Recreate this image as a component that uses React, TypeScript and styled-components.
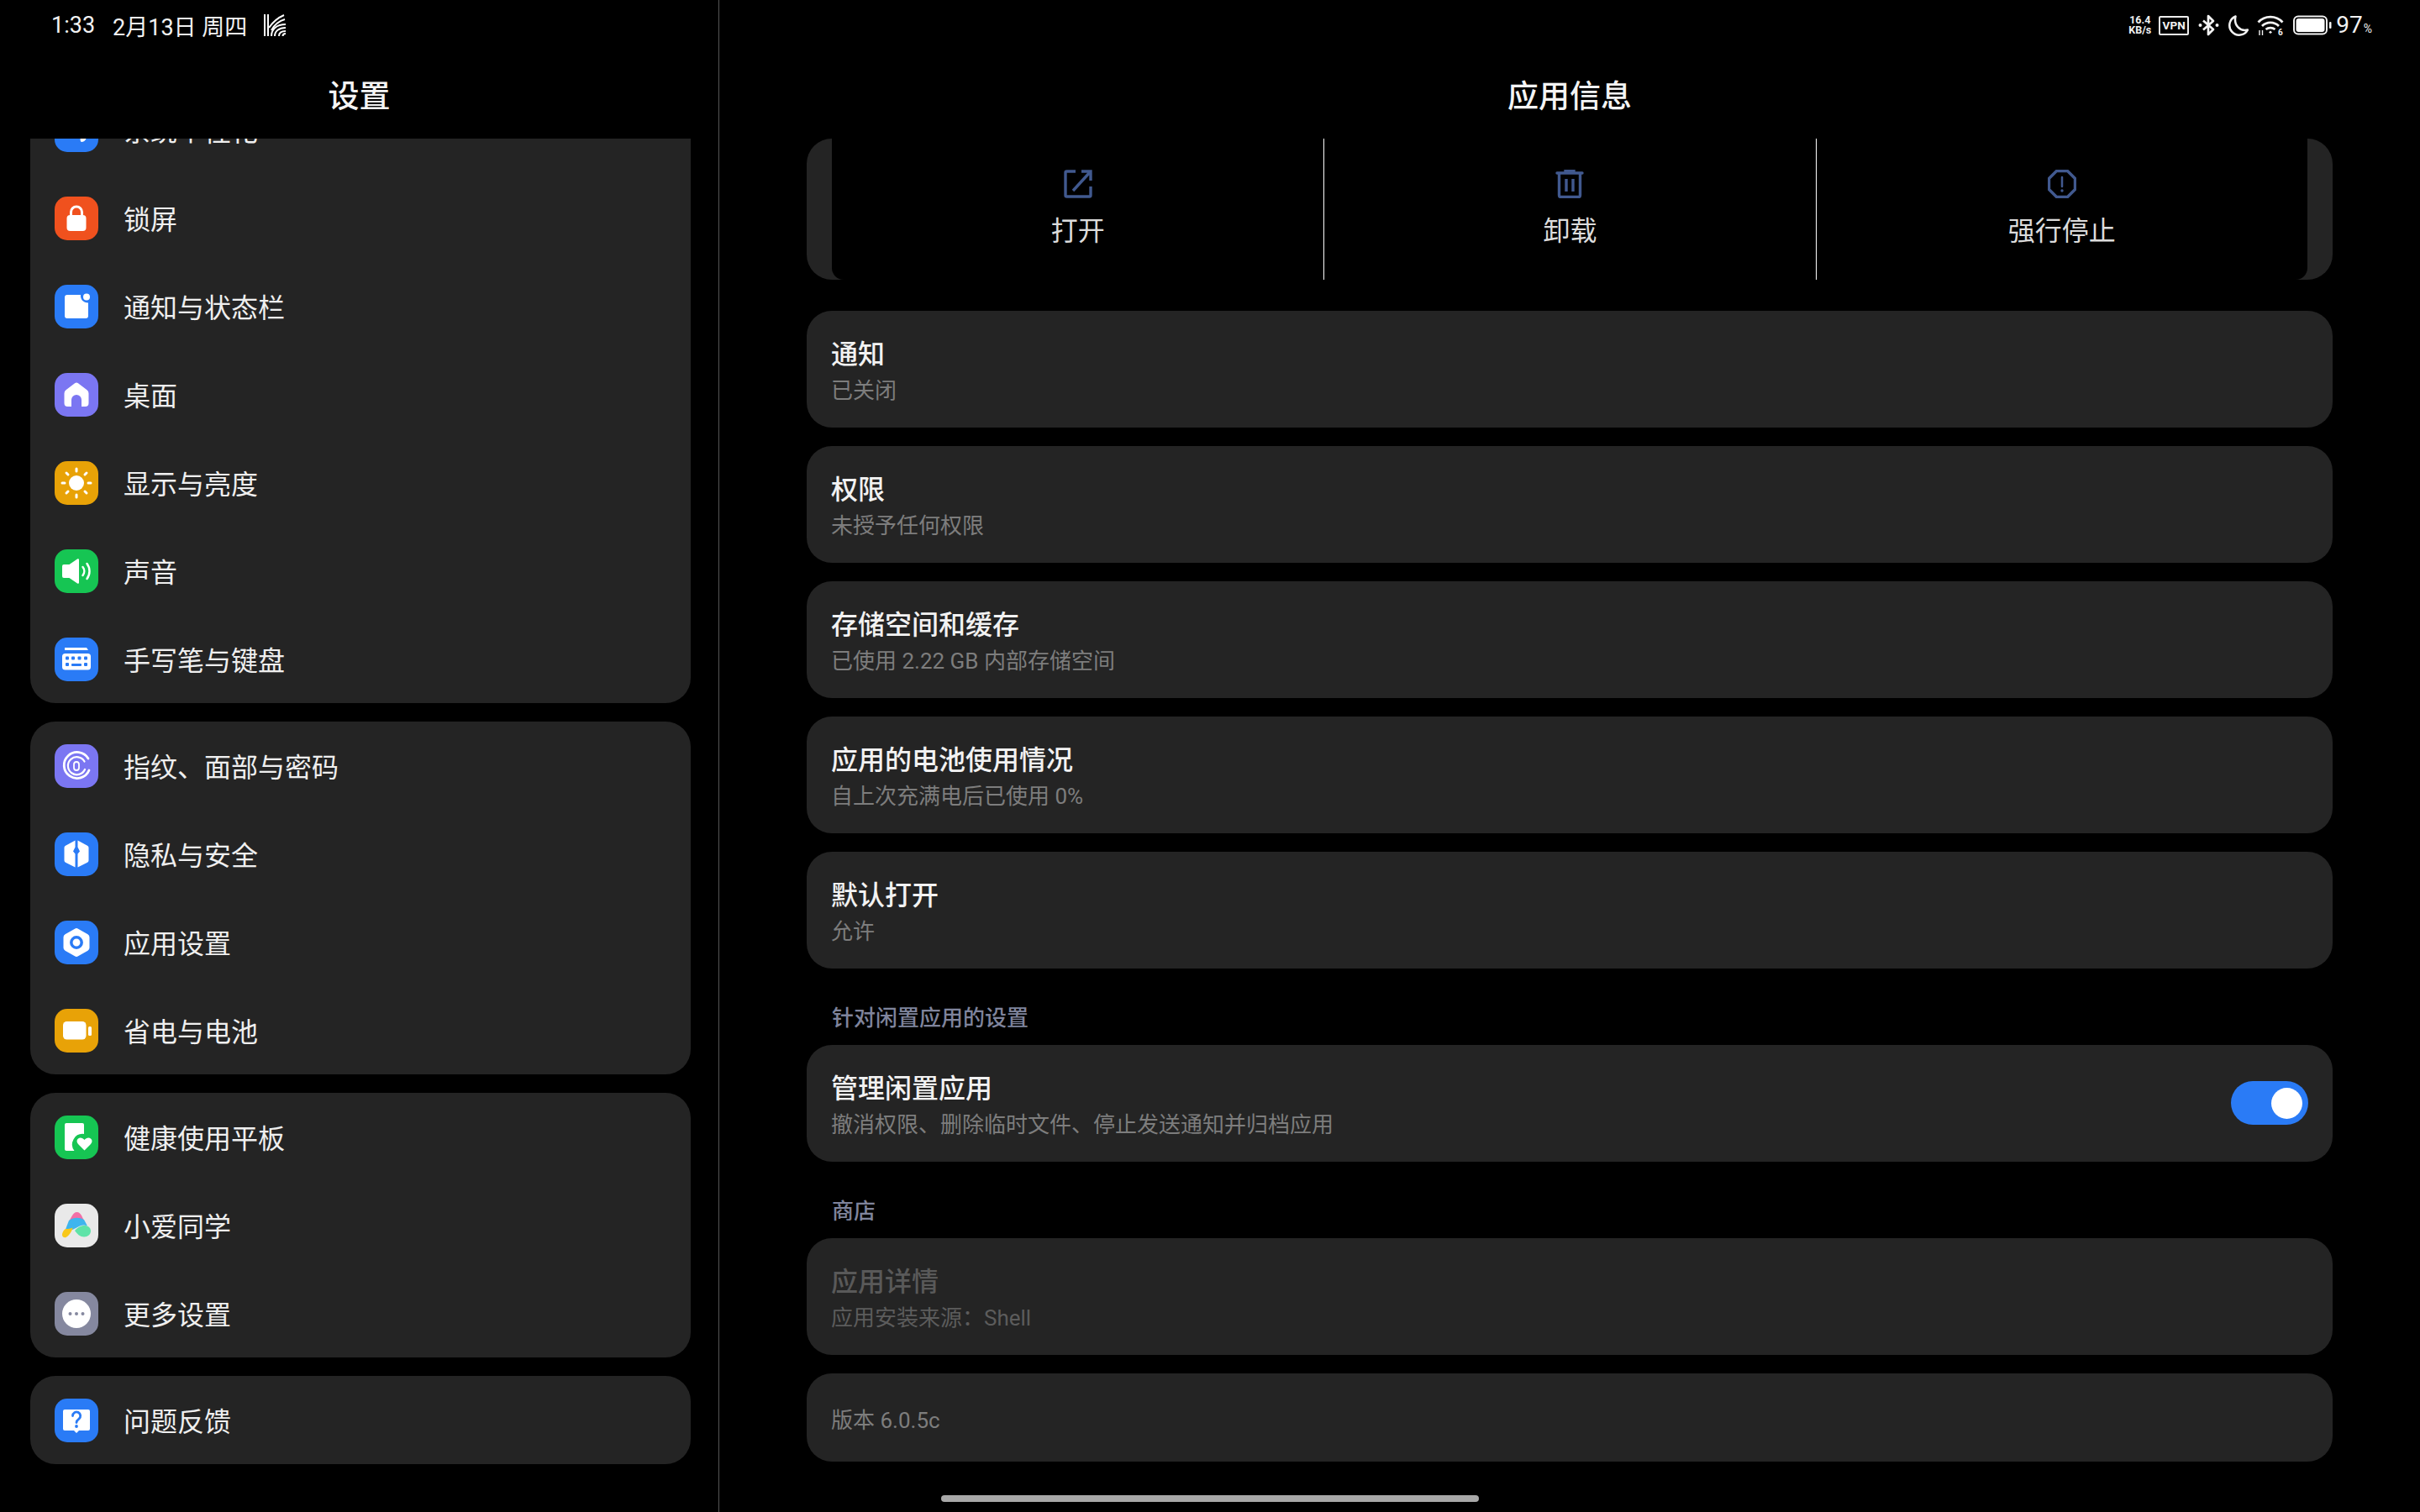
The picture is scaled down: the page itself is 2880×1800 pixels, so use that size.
import React from 'react';
import styled, { createGlobalStyle } from 'styled-components';

const Global = createGlobalStyle`
  html, body { margin: 0; padding: 0; background: #000; width: 2880px; height: 1800px; overflow: hidden; }
  * { box-sizing: border-box; }
  body { font-family: Roboto, "Noto Sans CJK SC", sans-serif; color: #fff; }
`;

const Screen = styled.div`
  position: relative;
  display: grid;
  grid-template-columns: 856px 1fr;
  width: 2880px;
  height: 1800px;
  background: #000;
  overflow: hidden;
`;
const Pane = styled.section<{ $divider?: boolean }>`
  display: flex;
  flex-direction: column;
  height: 1800px;
  min-width: 0;
  border-right: ${p => (p.$divider ? '1px solid #565656' : 'none')};
`;
const StatusBar = styled.div<{ $end?: boolean }>`
  display: flex;
  align-items: center;
  justify-content: ${p => (p.$end ? 'flex-end' : 'flex-start')};
  height: 60px;
  padding: ${p => (p.$end ? '0 57px 0 0' : '0 0 0 61px')};
  font-size: 27px;
  color: #f2f2f2;
  flex: none;
`;
const Clock = styled.span`
  margin-right: 21px;
`;
const DateText = styled.span`
  margin-right: 20px;
`;
const NetSpeed = styled.div`
  display: flex;
  flex-direction: column;
  align-items: center;
  font-size: 12.5px;
  line-height: 12px;
  font-weight: 700;
  margin-right: 9px;
`;
const VpnBox = styled.div`
  width: 36px;
  height: 23px;
  border: 2px solid #eee;
  border-radius: 2px;
  font-size: 13.5px;
  font-weight: 700;
  line-height: 19px;
  text-align: center;
  letter-spacing: 0.2px;
  margin-right: 11px;
`;
const StatusIcon = styled.svg<{ $gap: number }>`
  display: block;
  margin-right: ${p => p.$gap}px;
  flex: none;
`;
const BatteryValue = styled.span`
  font-size: 28px;
  line-height: 60px;
  padding-top: 3px;
`;
const Percent = styled.span`
  font-size: 14px;
  margin-left: 1px;
`;
const TitleBar = styled.header`
  display: flex;
  align-items: center;
  justify-content: center;
  height: 105px;
  padding-bottom: 2px;
  flex: none;
  font-size: 37px;
  font-weight: 500;
  color: #f4f4f4;
`;
const SettingsList = styled.div`
  flex: 1;
  min-height: 0;
  overflow: hidden;
  display: flex;
  flex-direction: column;
  gap: 22px;
  padding: 0 33px 0 36px;
`;
const Group = styled.div<{ $scrolled?: boolean }>`
  background: #242424;
  border-radius: 30px;
  flex: none;
  margin-top: ${p => (p.$scrolled ? '-63px' : '0')};
`;
const MenuRow = styled.div`
  display: flex;
  align-items: center;
  height: 105px;
  padding-left: 29px;
  gap: 30px;
  font-size: 32px;
  color: #efefef;
`;
const MenuLabel = styled.span`
  line-height: 44px;
  position: relative;
  top: 2px;
`;
const Tile = styled.div<{ $bg: string }>`
  width: 52px;
  height: 52px;
  border-radius: 15px;
  background: ${p => p.$bg};
  flex: none;
  svg { display: block; }
`;
const Detail = styled.div`
  flex: 1;
  min-height: 0;
  overflow: hidden;
  display: flex;
  flex-direction: column;
  padding: 0 104px;
`;
const ActionCard = styled.div`
  flex: none;
  height: 168px;
  padding: 0 30px;
  background: #242424;
  border-radius: 30px;
  margin-bottom: 37px;
`;
const ActionGrid = styled.div`
  display: grid;
  grid-template-columns: repeat(3, 1fr);
  height: 100%;
  background: #000;
  border-radius: 0 0 14px 14px;
`;
const ActionCell = styled.div<{ $first?: boolean }>`
  display: flex;
  flex-direction: column;
  align-items: center;
  padding-top: 37px;
  gap: 17px;
  border-left: ${p => (p.$first ? 'none' : '1px solid #fff')};
  font-size: 32px;
  line-height: 44px;
  color: #dcdcdc;
  svg { display: block; }
`;
const InfoStack = styled.div`
  display: flex;
  flex-direction: column;
  gap: 22px;
  flex: none;
`;
const InfoCard = styled.div<{ $compact?: boolean }>`
  display: flex;
  align-items: center;
  justify-content: space-between;
  height: ${p => (p.$compact ? '105px' : '139px')};
  padding: 0 29px 0 29px;
  background: #242424;
  border-radius: 30px;
  flex: none;
`;
const InfoText = styled.div`
  display: flex;
  flex-direction: column;
  padding-top: 7px;
`;
const InfoTitle = styled.div<{ $muted?: boolean }>`
  font-size: 32px;
  line-height: 44px;
  font-weight: 500;
  color: ${p => (p.$muted ? '#595959' : '#f2f2f2')};
`;
const InfoSub = styled.div<{ $muted?: boolean }>`
  font-size: 26px;
  line-height: 42px;
  color: ${p => (p.$muted ? '#5c5c5c' : '#7d7d7d')};
`;
const SectionLabel = styled.div`
  padding: 41px 0 14px 30px;
  font-size: 26px;
  line-height: 36px;
  font-weight: 500;
  color: #7f849c;
`;
const Toggle = styled.div`
  display: flex;
  align-items: center;
  justify-content: flex-end;
  width: 92px;
  height: 52px;
  margin-top: -1px;
  padding-right: 7px;
  border-radius: 26px;
  background: #2a7bf6;
  flex: none;
`;
const Knob = styled.div`
  width: 37px;
  height: 37px;
  border-radius: 50%;
  background: #fff;
`;
const HomeBar = styled.div`
  position: absolute;
  left: 1120px;
  bottom: 12px;
  width: 640px;
  height: 8px;
  border-radius: 4px;
  background: #a8a8a8;
`;

const BLUE = '#2a7bf6';
const Svg = ({ children }: { children: React.ReactNode }) => (
  <svg width="52" height="52" viewBox="0 0 52 52">{children}</svg>
);

const icons: Record<string, { bg: string; art: React.ReactNode }> = {
  personal: {
    bg: BLUE,
    art: <Svg><path d="M31 35c2-2 5-4 9-4l-3 6c-1 2-3 3-5 3-1 0-2-3-1-5z" fill="#fff" /></Svg>,
  },
  lock: {
    bg: '#f0511e',
    art: (
      <Svg>
        <path d="M19.5 24v-5.5a6.5 6.5 0 0 1 13 0V24" fill="none" stroke="#fff" strokeWidth="3" />
        <rect x="14.5" y="22" width="23" height="19" rx="4" fill="#fff" />
      </Svg>
    ),
  },
  notify: {
    bg: BLUE,
    art: (
      <Svg>
        <path d="M15 12h16c-.6 5 3 9.500 9 9.500V37a3 3 0 0 1-3 3H15a3 3 0 0 1-3-3V15a3 3 0 0 1 3-3z" fill="#fff" />
        <circle cx="38" cy="14.500" r="4" fill="#fff" />
      </Svg>
    ),
  },
  home: {
    bg: '#7b76f2',
    art: (
      <Svg>
        <path fillRule="evenodd" d="M24 12.200a3.400 3.400 0 0 1 4 0l10.500 8a5 5 0 0 1 2 4V36a4 4 0 0 1-4 4H32V32a6 6 0 0 0-12 0v8h-4.500a4 4 0 0 1-4-4V24.200a5 5 0 0 1 2-4z" fill="#fff" />
      </Svg>
    ),
  },
  sun: {
    bg: '#e8a207',
    art: (
      <Svg>
        <circle cx="26" cy="26" r="9" fill="#fff" />
        <g stroke="#fff" strokeWidth="3" strokeLinecap="round">
          <path d="M26 9v3M26 40v3M9 26h3M40 26h3M14 14l2 2M36 36l2 2M38 14l-2 2M16 36l-2 2" />
        </g>
      </Svg>
    ),
  },
  sound: {
    bg: '#16c553',
    art: (
      <Svg>
        <path d="M11 18h6.500L27 11.500c1-.6 2-.1 2 1v27c0 1.100-1 1.600-2 1L17.500 34H11a2 2 0 0 1-2-2V20a2 2 0 0 1 2-2z" fill="#fff" />
        <path d="M33.500 21a8 8 0 0 1 0 10M38.500 17a15 15 0 0 1 0 18" fill="none" stroke="#fff" strokeWidth="2.500" strokeLinecap="round" />
      </Svg>
    ),
  },
  keyboard: {
    bg: BLUE,
    art: (
      <Svg>
        <path d="M12 12h26l2 3H12z" fill="#fff" />
        <rect x="9" y="19" width="34" height="19.500" rx="3.500" fill="#fff" />
        <g fill={BLUE}>
          <rect x="13" y="22.500" width="4" height="4" rx="1" />
          <rect x="20" y="22.500" width="4" height="4" rx="1" />
          <rect x="27.500" y="22.500" width="4" height="4" rx="1" />
          <rect x="35" y="22.500" width="4" height="4" rx="1" />
          <rect x="13" y="30" width="4" height="4" rx="1" />
          <rect x="20" y="31" width="12" height="3" rx="1" />
          <rect x="35" y="30" width="4" height="4" rx="1" />
        </g>
      </Svg>
    ),
  },
  finger: {
    bg: '#7b76f2',
    art: (
      <Svg>
        <g fill="none" stroke="#fff" strokeLinecap="round">
          <path d="M40 17a15.500 15.500 0 1 0 1 14" strokeWidth="2.800" />
          <path d="M35.500 20.500a10.500 10.500 0 1 0 .5 9.500" strokeWidth="2.200" />
          <rect x="23" y="21" width="6" height="10" rx="3" strokeWidth="1.800" />
        </g>
      </Svg>
    ),
  },
  privacy: {
    bg: BLUE,
    art: (
      <Svg>
        <path d="M24.500 9.500v8l-2.500 5 2.500 3v16l-11-5.500a2.500 2.500 0 0 1-2-2.500V18a2.500 2.500 0 0 1 1.500-2.300z" fill="#fff" />
        <path d="M27.500 9.500v8l2.500 5-2.500 3v16l11-5.500a2.500 2.500 0 0 0 2-2.500V18a2.500 2.500 0 0 0-1.500-2.300z" fill="#fff" />
      </Svg>
    ),
  },
  apps: {
    bg: BLUE,
    art: (
      <Svg>
        <path d="M24 9.700a4 4 0 0 1 4 0l11.500 6.500a4 4 0 0 1 2 3.500v12.600a4 4 0 0 1-2 3.500L28 42.300a4 4 0 0 1-4 0l-11.500-6.500a4 4 0 0 1-2-3.500V19.700a4 4 0 0 1 2-3.500z" fill="#fff" />
        <circle cx="26" cy="26" r="6.200" fill="#fff" stroke={BLUE} strokeWidth="3.500" />
      </Svg>
    ),
  },
  battery: {
    bg: '#e8a207',
    art: (
      <Svg>
        <rect x="10" y="15" width="27.500" height="21.500" rx="4.500" fill="#fff" />
        <rect x="40" y="21" width="4" height="11" rx="1.500" fill="#fff" />
      </Svg>
    ),
  },
  health: {
    bg: '#16c553',
    art: (
      <Svg>
        <path d="M14 9h19a2 2 0 0 1 2 2v11a12.500 12.500 0 0 0-11.500 20H14a2 2 0 0 1-2-2V11a2 2 0 0 1 2-2z" fill="#fff" />
        <path d="M35.500 41.500 28 34c-2-2.200-2-5 0-6.500 2.200-1.700 5.500-1 7.500 1.500 2-2.500 5.300-3.200 7.500-1.500 2 1.500 2 4.300 0 6.500z" fill="#fff" />
      </Svg>
    ),
  },
  xiaoai: {
    bg: '#e9e9e9',
    art: (
      <Svg>
        <path d="M26.500 10c2.600 0 4.200 1.700 5.500 4l3 6c-6-3-12-3-18 1l4-7c1.300-2.300 3-4 5.500-4z" fill="#f36fa6" />
        <path d="M17 20c6-4 12-4 18-1l4 7.500c-3-1.500-6-1.500-9 0-3.500 1.800-6 3.300-9 4.500-3 1.200-6.500 1.500-8-.5z" fill="#3eb5ee" />
        <path d="M24 32c3-3 6-5.500 10-6 5-.6 9 2 9 6.500 0 4-3.500 7-8 7-4.500 0-8-3-11-7.500z" fill="#5fe3a8" />
        <path d="M13 30c3 0 6-.5 8.500-1.500-1 4-3.500 9-8 11.500-3.500 1-5.500-2-4-5.500.8-2 2-3.800 3.500-4.500z" fill="#f8c81a" />
      </Svg>
    ),
  },
  more: {
    bg: '#85889f',
    art: (
      <Svg>
        <circle cx="26" cy="26" r="17" fill="#fff" />
        <circle cx="18.500" cy="26" r="2" fill="#85889f" />
        <circle cx="26" cy="26" r="2" fill="#85889f" />
        <circle cx="33.500" cy="26" r="2" fill="#85889f" />
      </Svg>
    ),
  },
  feedback: {
    bg: BLUE,
    art: (
      <Svg>
        <path d="M12 13h28a2 2 0 0 1 2 2v21a2 2 0 0 1-2 2H29l-3 3-3-3H12a2 2 0 0 1-2-2V15a2 2 0 0 1 2-2z" fill="#fff" />
        <path d="M21.500 20.500a4.600 4.600 0 1 1 7.500 3.600c-1.800 1.400-3 2.300-3 4.400" fill="none" stroke={BLUE} strokeWidth="2.800" strokeLinecap="round" />
        <circle cx="26" cy="33" r="1.900" fill={BLUE} />
      </Svg>
    ),
  },
};

const groups: { label: string; icon: string }[][] = [
  [
    { label: '系统个性化', icon: 'personal' },
    { label: '锁屏', icon: 'lock' },
    { label: '通知与状态栏', icon: 'notify' },
    { label: '桌面', icon: 'home' },
    { label: '显示与亮度', icon: 'sun' },
    { label: '声音', icon: 'sound' },
    { label: '手写笔与键盘', icon: 'keyboard' },
  ],
  [
    { label: '指纹、面部与密码', icon: 'finger' },
    { label: '隐私与安全', icon: 'privacy' },
    { label: '应用设置', icon: 'apps' },
    { label: '省电与电池', icon: 'battery' },
  ],
  [
    { label: '健康使用平板', icon: 'health' },
    { label: '小爱同学', icon: 'xiaoai' },
    { label: '更多设置', icon: 'more' },
  ],
  [{ label: '问题反馈', icon: 'feedback' }],
];

const infoCards = [
  { title: '通知', sub: '已关闭' },
  { title: '权限', sub: '未授予任何权限' },
  { title: '存储空间和缓存', sub: '已使用 2.22 GB 内部存储空间' },
  { title: '应用的电池使用情况', sub: '自上次充满电后已使用 0%' },
  { title: '默认打开', sub: '允许' },
];

const ACCENT = '#41598f';
const OpenIcon = () => (
  <svg width="34" height="34" viewBox="0 0 34 34" fill="none" stroke={ACCENT} strokeWidth="3.400">
    <path d="M14 2H3.500A1.500 1.500 0 0 0 2 3.500v27A1.500 1.500 0 0 0 3.500 32h27a1.500 1.500 0 0 0 1.500-1.500V20" />
    <path d="M21 2h11v11M32 2 11 25" />
  </svg>
);
const TrashIcon = () => (
  <svg width="34" height="34" viewBox="0 0 34 34" fill="none" stroke={ACCENT} strokeWidth="3.400">
    <path d="M2 4h30" strokeLinecap="round" />
    <path d="M12 3.500V1.500h10v2" />
    <path d="M4.500 4.500v26a2 2 0 0 0 2 2h21a2 2 0 0 0 2-2v-26" />
    <path d="M13 11v15M21 11v15" />
  </svg>
);
const StopIcon = () => (
  <svg width="34" height="34" viewBox="0 0 34 34" fill="none" stroke={ACCENT} strokeWidth="3.400">
    <path d="M10.500 1.500h13L32.500 10.500v13l-9 9h-13l-9-9v-13z" strokeLinejoin="round" />
    <path d="M17 9v11" strokeWidth="2.500" strokeLinecap="round" />
    <circle cx="17" cy="25" r="1.700" fill={ACCENT} stroke="none" />
  </svg>
);

const Logo = () => (
  <svg width="26" height="26" viewBox="0 0 26 26" fill="none" stroke="#fff" strokeWidth="2">
    <path d="M1 0v26M5 0v26" />
    <path d="M24 1C17 4 11 9 6 16M25 6c-7 2-12 6-16 13" />
    <path d="M9 26c0-8 6-14 17-14" />
    <path d="M13 26c0-6 5-10 13-10" />
    <path d="M18 26c0-4 3-6 8-6" />
    <path d="M22.500 26c0-2 1.500-3 3.500-3" />
  </svg>
);

export default function App() {
  return (
    <Screen>
      <Global />
      <Pane $divider>
        <StatusBar>
          <Clock>1:33</Clock>
          <DateText>2月13日 周四</DateText>
          <Logo />
        </StatusBar>
        <TitleBar>设置</TitleBar>
        <SettingsList>
          {groups.map((rows, i) => (
            <Group key={i} $scrolled={i === 0}>
              {rows.map(r => (
                <MenuRow key={r.label}>
                  <Tile $bg={icons[r.icon].bg}>{icons[r.icon].art}</Tile>
                  <MenuLabel>{r.label}</MenuLabel>
                </MenuRow>
              ))}
            </Group>
          ))}
        </SettingsList>
      </Pane>
      <Pane>
        <StatusBar $end>
          <NetSpeed>
            <span>16.4</span>
            <span>KB/s</span>
          </NetSpeed>
          <VpnBox>VPN</VpnBox>
          <StatusIcon $gap={10} width="25" height="26" viewBox="0 0 25 26" fill="none" stroke="#f2f2f2" strokeWidth="2.700">
            <path d="M6 7.500 18 18l-6 6V2l6 6L6 18.500" strokeLinejoin="round" />
            <circle cx="2.500" cy="13" r="2" fill="#f2f2f2" stroke="none" />
            <circle cx="22.500" cy="13" r="2" fill="#f2f2f2" stroke="none" />
          </StatusIcon>
          <StatusIcon $gap={10} width="25" height="26" viewBox="0 0 25 26" fill="none" stroke="#f2f2f2" strokeWidth="2.500">
            <path d="M9.500 2.500A11.500 11.500 0 1 0 24 18.500C15 21 7 13 9.500 2.500z" strokeLinejoin="round" />
          </StatusIcon>
          <StatusIcon $gap={11} width="32" height="32" viewBox="0 0 32 32" fill="none" stroke="#f2f2f2" strokeWidth="2.800">
            <path d="M1.500 12.500C9.500 4 22.500 4 30.500 12.500" />
            <path d="M6 17c5.500-5.500 14.500-5.500 20 0" />
            <path d="M10.500 21c3-2.500 8-2.500 11 0" />
            <path d="M14 24.500 16 22.500 18 24.500 16 26z" fill="#f2f2f2" stroke="none" />
            <path d="M3 22v6M6.500 22v6" strokeWidth="1.400" />
            <text x="25" y="28" fontSize="10" fontWeight="700" fill="#f2f2f2" stroke="none" fontFamily="Roboto, sans-serif">6</text>
          </StatusIcon>
          <StatusIcon $gap={5} width="46" height="24" viewBox="0 0 46 24">
            <rect x="1" y="1.500" width="39" height="21" rx="5" fill="none" stroke="#f2f2f2" strokeWidth="2" />
            <rect x="3.500" y="4" width="34" height="16" rx="3" fill="#fff" />
            <rect x="43" y="8" width="2.500" height="8" rx="1" fill="#f2f2f2" />
          </StatusIcon>
          <BatteryValue>97<Percent>%</Percent></BatteryValue>
        </StatusBar>
        <TitleBar>应用信息</TitleBar>
        <Detail>
          <ActionCard>
            <ActionGrid>
              <ActionCell $first><OpenIcon />打开</ActionCell>
              <ActionCell><TrashIcon />卸载</ActionCell>
              <ActionCell><StopIcon />强行停止</ActionCell>
            </ActionGrid>
          </ActionCard>
          <InfoStack>
            {infoCards.map(c => (
              <InfoCard key={c.title}>
                <InfoText>
                  <InfoTitle>{c.title}</InfoTitle>
                  <InfoSub>{c.sub}</InfoSub>
                </InfoText>
              </InfoCard>
            ))}
          </InfoStack>
          <SectionLabel>针对闲置应用的设置</SectionLabel>
          <InfoCard>
            <InfoText>
              <InfoTitle>管理闲置应用</InfoTitle>
              <InfoSub>撤消权限、删除临时文件、停止发送通知并归档应用</InfoSub>
            </InfoText>
            <Toggle><Knob /></Toggle>
          </InfoCard>
          <SectionLabel>商店</SectionLabel>
          <InfoStack>
            <InfoCard>
              <InfoText>
                <InfoTitle $muted>应用详情</InfoTitle>
                <InfoSub $muted>应用安装来源：Shell</InfoSub>
              </InfoText>
            </InfoCard>
            <InfoCard $compact>
              <InfoText>
                <InfoSub>版本 6.0.5c</InfoSub>
              </InfoText>
            </InfoCard>
          </InfoStack>
        </Detail>
      </Pane>
      <HomeBar />
    </Screen>
  );
}
